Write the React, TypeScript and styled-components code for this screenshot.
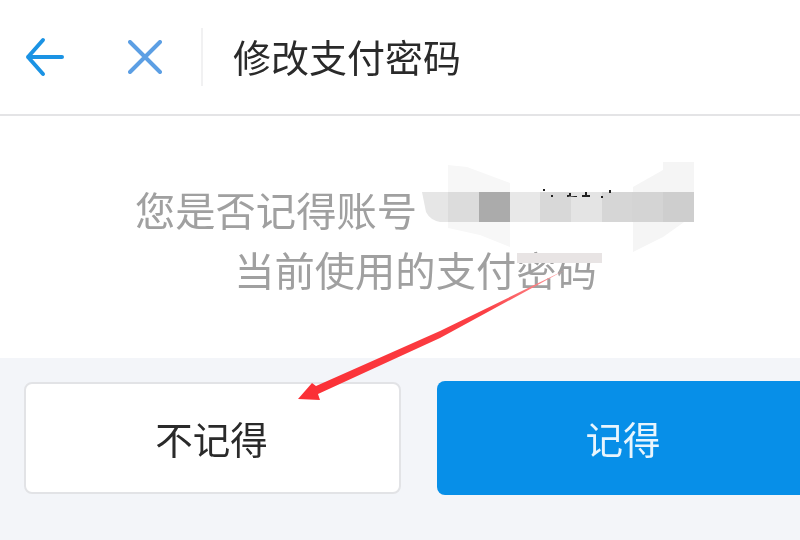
import React from "react";
import styled, { createGlobalStyle } from "styled-components";

const Global = createGlobalStyle`
  html, body { margin: 0; padding: 0; background: #fff; }
  body { overflow: hidden; }
  #root { width: 800px; height: 540px; }
`;

const Page = styled.div`
  position: relative;
  width: 800px;
  height: 540px;
  overflow: hidden;
  display: flex;
  flex-direction: column;
  background: #fff;
  font-family: "Noto Sans CJK SC", "Liberation Sans", sans-serif;
  filter: blur(0.7px);
`;

const Header = styled.header`
  height: 116px;
  flex: none;
  box-sizing: border-box;
  border-bottom: 2px solid #e4e4e6;
  display: flex;
  align-items: center;
  padding: 0 0 0 24px;
`;

const IconButton = styled.button<{ $gap: number }>`
  width: 42px;
  height: 42px;
  padding: 0;
  border: 0;
  background: none;
  display: flex;
  align-items: center;
  justify-content: center;
  margin-right: ${(p) => p.$gap}px;
`;

const Divider = styled.div`
  width: 2px;
  height: 58px;
  background: #f1f1f2;
  margin: 0 30px 0 35px;
`;

const Title = styled.h1`
  margin: 0 0 2px;
  font-size: 38px;
  font-weight: 400;
  line-height: 1;
  color: #2a2a2a;
`;

const Body = styled.main`
  height: 242px;
  flex: none;
  box-sizing: border-box;
  padding: 63px 0 0 31px;
  text-align: center;
  font-size: 40.3px;
  line-height: 60px;
  color: #a0a0a0;
`;

const Account = styled.span`
  display: inline-block;
  width: 279px;
  height: 1px;
`;

const Footer = styled.footer`
  flex: 1;
  background: #f3f5f9;
  display: flex;
  gap: 36px;
  padding: 24px 0 0 24px;
  align-items: flex-start;
`;

const Choice = styled.button<{ $primary?: boolean }>`
  flex: none;
  box-sizing: border-box;
  height: ${(p) => (p.$primary ? 114 : 112)}px;
  width: ${(p) => (p.$primary ? 372 : 377)}px;
  margin-top: ${(p) => (p.$primary ? -1 : 0)}px;
  border-radius: ${(p) => (p.$primary ? "8px 0 0 8px" : "8px")};
  border: ${(p) => (p.$primary ? "0" : "2px solid #e2e3e6")};
  background: ${(p) => (p.$primary ? "#078fe8" : "#fff")};
  color: ${(p) => (p.$primary ? "#e8f5fd" : "#2a2a2a")};
  font-family: inherit;
  font-size: 37.5px;
  line-height: 1;
  padding: 0 ${(p) => (p.$primary ? 0 : 2)}px 0 0;
`;

const Overlay = styled.svg`
  position: absolute;
  left: 0;
  top: 0;
  width: 800px;
  height: 540px;
  pointer-events: none;
`;

const cells: [number, string][] = [
  [448, "#dcdcdc"], [479, "#ababab"], [510, "#e8e8e8"], [540, "#d8d8d8"],
  [571, "#e4e4e4"], [602, "#d6d6d6"], [632, "#d4d4d4"], [663, "#cecece"],
];

export default function App() {
  return (
    <Page>
      <Global />
      <Header>
        <IconButton $gap={58} aria-label="返回">
          <svg width="42" height="42" viewBox="0 0 42 42" fill="none" stroke="#1b93e4" strokeWidth="4" strokeLinecap="round" strokeLinejoin="round">
            <path d="M38 21H4M19 4 4 21l15 17" />
          </svg>
        </IconButton>
        <IconButton $gap={0} aria-label="关闭">
          <svg width="34" height="34" viewBox="0 0 34 34" fill="none" stroke="#5c9fe4" strokeWidth="4" strokeLinecap="round">
            <path d="M2 2l30 30M32 2 2 32" />
          </svg>
        </IconButton>
        <Divider />
        <Title>修改支付密码</Title>
      </Header>
      <Body>
        您是否记得账号<Account />
        <br />
        当前使用的支付密码
      </Body>
      <Footer>
        <Choice>不记得</Choice>
        <Choice $primary>记得</Choice>
      </Footer>
      <Overlay viewBox="0 0 800 540">
        <defs>
          <linearGradient id="tail" x1="298" y1="400" x2="565" y2="270" gradientUnits="userSpaceOnUse">
            <stop offset="0" stopColor="#fb2f35" />
            <stop offset="0.7" stopColor="#fb4045" />
            <stop offset="1" stopColor="#fda0a2" />
          </linearGradient>
        </defs>
        <path d="M448 165 467 167 510 183V247L480 235 448 228Z" fill="#f7f7f7" />
        <path d="M663 170V162H694V215L663 237 633 252V187Z" fill="#f5f5f5" />
        <path d="M517 253H602V263H517Z" fill="#e8e4e4" />
        <path d="M422 192H448V222H440Q430 220 426 212Z" fill="#e6e6e6" />
        {cells.map(([x, c], i) => (
          <rect key={x} x={x} y={192} width={(cells[i + 1]?.[0] ?? 694) - x} height={30} fill={c} />
        ))}
        <path d="M543 191h2v-2h-2ZM551 197h2v-2h-2ZM565 197h2v-2h2v-2h2v4h6v-1h-2ZM582 197h8v-2h-3v-3h-2v3h-3ZM601 198h2v-2h-2ZM609 193h2v-3h-2Z" fill="#222" />
        <path d="M565 270 440 331 316 386 312 383 298 399 320 400 318 394 440 338Z" fill="url(#tail)" />
      </Overlay>
    </Page>
  );
}
